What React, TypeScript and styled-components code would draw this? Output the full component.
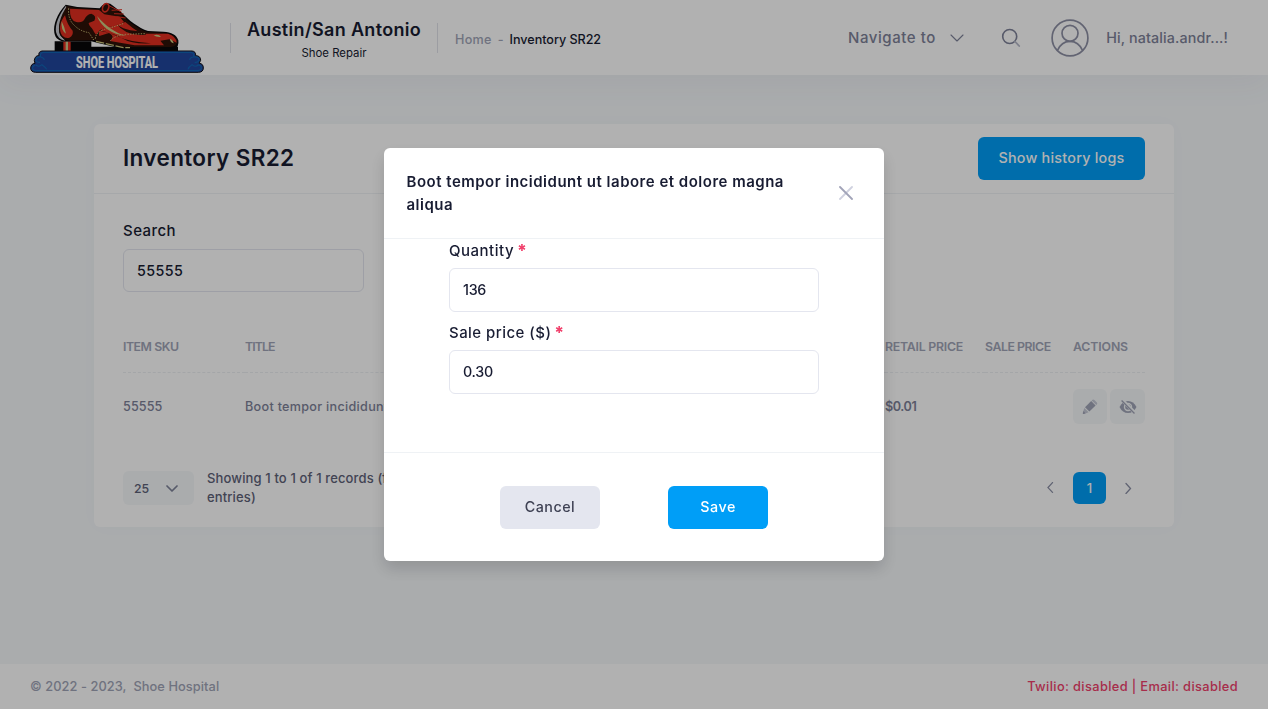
import React from 'react';
import styled, { createGlobalStyle } from 'styled-components';

const Global = createGlobalStyle`
  *, *::before, *::after { box-sizing: border-box; }
  body {
    margin: 0;
    background: #f5f8fa;
    font-family: Inter, 'Open Sans', sans-serif;
    font-size: 13px;
    font-weight: 500;
    color: #181c32;
    overflow: hidden;
  }
  button, input { font: inherit; color: inherit; }
`;

const Page = styled.div`
  display: flex;
  flex-direction: column;
  height: 709px;
`;

const Text = styled.span<{ $size?: number; $weight?: number; $color?: string; $track?: number; $line?: number }>`
  font-size: ${(p) => p.$size ?? 13}px;
  font-weight: ${(p) => p.$weight ?? 500};
  color: ${(p) => p.$color ?? '#181c32'};
  letter-spacing: ${(p) => p.$track ?? 0}px;
  line-height: ${(p) => (p.$line ? `${p.$line}px` : 'normal')};
  white-space: pre;
`;

const Header = styled.header`
  display: flex;
  align-items: center;
  height: 75px;
  flex: none;
  padding: 0 40px 0 30px;
  background: #fff;
  box-shadow: 0 10px 30px rgba(82, 63, 105, 0.05);
`;

const LogoDrawing = styled.svg`
  display: block;
  overflow: visible;
`;

const Divider = styled.div<{ $gap?: number }>`
  width: 1px;
  height: 30px;
  margin-left: ${(p) => p.$gap ?? 0}px;
  background: #e1e3ea;
`;

const Store = styled.div`
  display: flex;
  flex-direction: column;
  align-items: center;
  width: 206px;
  padding-top: 5px;
`;

const Breadcrumb = styled.nav`
  display: flex;
  gap: 6px;
  margin-left: 17px;
  padding-top: 4px;
`;

const HeaderRight = styled.div`
  display: flex;
  align-items: center;
  margin-left: auto;
  svg { display: block; }
`;

const NavMenu = styled.div`
  display: flex;
  align-items: center;
  justify-content: space-between;
  width: 116px;
  margin-right: 37px;
`;

const Profile = styled.div`
  display: flex;
  align-items: center;
  justify-content: space-between;
  width: 177px;
  margin-left: 30px;
`;

const Main = styled.main`
  flex: 1;
  padding: 49px 94px 0;
`;

const Card = styled.section`
  height: 403px;
  background: #fff;
  border-radius: 6px;
  box-shadow: 0 0 20px rgba(76, 87, 125, 0.02);
`;

const CardHeader = styled.div`
  display: flex;
  align-items: center;
  justify-content: space-between;
  height: 70px;
  padding: 0 29px;
  border-bottom: 1px solid #eff2f5;
`;

const CardTitle = styled.h1`
  margin: 0 0 2px;
  font-size: 22.5px;
  font-weight: 600;
  letter-spacing: 0.36px;
`;

const Button = styled.button<{ $width: number; $light?: boolean }>`
  width: ${(p) => p.$width}px;
  height: 43px;
  padding: 0 0 2px;
  border: 0;
  border-radius: 6px;
  background: ${(p) => (p.$light ? '#e4e6ef' : '#009ef7')};
`;

const CardBody = styled.div`
  padding: 27px 29px 0;
`;

const Field = styled.label<{ $width: number }>`
  display: flex;
  flex-direction: column;
  width: ${(p) => p.$width}px;
`;

const Input = styled.input<{ $gap?: number; $height?: number; $track?: number }>`
  height: ${(p) => p.$height ?? 43}px;
  margin-top: ${(p) => p.$gap ?? 7}px;
  padding: 0 13px 1px;
  border: 1px solid #e4e6ef;
  border-radius: 6px;
  background: #fff;
  font-size: 14.3px;
  letter-spacing: ${(p) => p.$track ?? 0}px;
  outline: none;
`;

const Table = styled.div`
  margin-top: 29px;
`;

const Row = styled.div<{ $height: number }>`
  display: grid;
  grid-template-columns: 122px 640px 100px 88px 72px;
  height: ${(p) => p.$height}px;
`;

const Cell = styled.div<{ $head?: boolean }>`
  display: flex;
  align-items: center;
  gap: 3px;
  border-bottom: ${(p) => (p.$head ? '1px dashed #eceff3' : '0')};
`;

const IconButton = styled.button<{ $width: number }>`
  display: flex;
  align-items: center;
  justify-content: center;
  width: ${(p) => p.$width}px;
  height: 35px;
  padding: 0;
  border: 0;
  border-radius: 6px;
  background: #f5f8fa;
`;

const TableFooter = styled.div`
  display: flex;
  align-items: center;
  margin-top: 29px;
`;

const PageSize = styled.div`
  display: flex;
  align-items: center;
  justify-content: space-between;
  width: 71px;
  height: 34px;
  margin-right: 13px;
  padding: 0 16px 0 11px;
  border-radius: 6px;
  background: #f5f8fa;
`;

const Pagination = styled.div`
  display: flex;
  align-items: center;
  gap: 18px;
  margin-left: auto;
  margin-right: -1px;
`;

const PageNumber = styled.div`
  display: flex;
  align-items: center;
  justify-content: center;
  width: 33px;
  height: 32px;
  border-radius: 6px;
  background: #009ef7;
`;

const Footer = styled.footer`
  display: flex;
  align-items: center;
  justify-content: space-between;
  height: 45px;
  padding: 0 30px;
  background: #fff;
`;

const Backdrop = styled.div`
  position: fixed;
  inset: 0;
  display: flex;
  align-items: center;
  justify-content: center;
  background: rgba(0, 0, 0, 0.305);
`;

const Modal = styled.div`
  width: 500px;
  height: 413px;
  background: #fff;
  border-radius: 6px;
  box-shadow: 0 8px 16px rgba(0, 0, 0, 0.15);
`;

const ModalHeader = styled.div`
  display: flex;
  align-items: center;
  justify-content: space-between;
  height: 91px;
  padding: 0 31.5px 0 22.5px;
  border-bottom: 1px solid #eff2f5;
`;

const ModalBody = styled.div`
  display: flex;
  flex-direction: column;
  gap: 9px;
  height: 213px;
  padding: 0 65px;
`;

const LabelRow = styled.div`
  display: flex;
  align-items: center;
  gap: 3px;
  height: 22px;
`;

const Required = styled.span`
  padding-top: 3px;
  font-size: 17px;
  font-weight: 800;
  line-height: 19px;
  color: #f1416c;
`;

const ModalFooter = styled.div`
  display: flex;
  align-items: center;
  justify-content: center;
  gap: 68px;
  height: 109px;
  border-top: 1px solid #eff2f5;
`;

const Logo = () => (
  <LogoDrawing width="174" height="71" viewBox="30 6 522 213">
    <path d="M104 124H214V154H104zM210 140H474V154H210z" fill="#08080a" />
    <path d="M130 125H152V154H130z" fill="#e22f20" />
    <path d="M137 125H144V154H137z" fill="#c8c58a" />
    <path d="M137 14C111 41 99 74 103 98C106 116 119 124 136 124H214L234 129L310 147H462Q478 142 475 121C470 104 455 97 430 95L384 93C356 84 326 61 303 36L279 17Q263 3 247 16L239 25L172 21Z" fill="#08080a" />
    <path d="M138 17C116 45 105 73 108 96Q113 119 136 122L120 105C112 82 123 50 141 30Z" fill="#c9ccd2" />
    <path d="M141 18C120 49 111 82 121 105Q128 119 148 122L224 121L305 141H452Q471 139 472 122Q465 102 430 98L380 96C347 83 322 63 297 37L271 22L239 28L172 24Z" fill="#2d1208" />
    <path d="M150 26L237 30L253 43L299 50L312 66L292 76L262 82L240 90L228 104L222 96C219 85 206 78 206 69L223 62Q231 47 214 41Q200 43 194 57Q187 70 169 66Q148 60 150 26Z" fill="#e22f20" />
    <path d="M135 46C118 67 116 94 127 107Q137 117 148 113Q161 106 158 92Q142 76 135 46Z" fill="#e22f20" />
    <path d="M248 86L316 66Q338 86 364 101L444 101Q469 109 470 128L448 118L421 122L432 136H344L270 123Q287 108 267 99L238 108Q232 97 248 86Z" fill="#e22f20" />
    <path d="M239 92Q282 99 309 116T393 130Q327 126 292 109T239 92ZM288 70Q310 94 372 94L378 104Q320 112 288 70Z" fill="#2d1208" />
    <path d="M231 48C245 83 275 103 321 109C282 97 259 79 231 48ZM125 64Q122 91 138 101Q133 79 125 64ZM401 106Q416 101 423 111Q408 112 401 106ZM450 116Q459 119 461 130Q450 127 450 116Z" fill="#cbc982" />
    <path d="M146 25Q143 59 164 77Q181 94 207 98L221 120M226 116Q228 91 270 84L312 70M271 122Q287 105 318 103L376 101" fill="none" stroke="#cfc57b" strokeWidth="3" strokeDasharray="4 4" />
    <path d="M228 124L310 143H330" fill="none" stroke="#cfc57b" strokeWidth="4" strokeDasharray="25 5" />
    <ellipse cx="257" cy="23" rx="9" ry="13" transform="rotate(22 257 23)" fill="#2d1208" stroke="#e22f20" strokeWidth="5" />
    <path d="M267 17L304 36M275 31L306 29M282 41L311 42M289 50L317 54" stroke="#e22f20" strokeWidth="3" />
    <path d="M66 153H516Q528 154 527 167Q542 167 542 181Q538 188 538 190Q550 191 550 204Q550 216 536 217H46Q32 216 32 204Q33 191 45 190Q40 180 46 172Q50 166 57 167Q54 155 66 153Z" fill="#20469d" stroke="#101014" strokeWidth="3" />
    <path d="M69 157H513Q523 158 521 171Q538 169 537 180Q534 188 524 188M69 157Q59 158 62 171Q47 169 48 182Q51 188 60 187M46 195Q36 199 38 207Q42 213 50 212H533Q546 210 544 201Q541 194 532 195M62 171Q72 173 73 180M521 171Q510 172 509 180M48 195Q56 203 66 194Q77 202 80 208M536 195Q524 203 516 194Q505 201 504 208" fill="none" stroke="#1265b4" strokeWidth="3.5" />
    <text x="168" y="203" textLength="246" lengthAdjust="spacingAndGlyphs" fontFamily="Roboto" fontWeight="700" fontSize="50" fill="#fff" stroke="#fff" strokeWidth="0.6">SHOE HOSPITAL</text>
  </LogoDrawing>
);

const Chevron = ({ w, h, color, stroke }: { w: number; h: number; color: string; stroke: number }) => (
  <svg width={w} height={h} viewBox={`0 0 ${w} ${h}`} fill="none" stroke={color} strokeWidth={stroke} strokeLinecap="round" strokeLinejoin="round">
    <path d={`M1 1L${w / 2} ${h - 1}L${w - 1} 1`} />
  </svg>
);

const PageArrow = ({ right }: { right?: boolean }) => (
  <svg width="22" height="12" viewBox="0 0 22 12" fill="none" stroke="#8c90a6" strokeWidth="1.3" strokeLinecap="round">
    <path d={right ? 'M2 1.5L6.5 6.5L2 11.5' : 'M19.5 0.6L15 5.6L19.5 10.4'} />
  </svg>
);

const COLUMNS = [
  { label: 'ITEM SKU', track: -0.45 },
  { label: 'TITLE', track: -0.9 },
  { label: 'RETAIL PRICE', track: -0.23 },
  { label: 'SALE PRICE', track: -0.45 },
  { label: 'ACTIONS', track: -0.12 },
];

export default function App() {
  return (
    <>
      <Global />
      <Page>
        <Header>
          <Logo />
          <Divider $gap={26} />
          <Store>
            <Text $size={18} $weight={600} $track={0.32} $line={25}>Austin/San Antonio</Text>
            <Text $size={11.4} $weight={400} $line={22}>Shoe Repair</Text>
          </Store>
          <Divider />
          <Breadcrumb>
            <Text $size={12.6} $color="#a1a5b7" $track={0.3}>Home</Text>
            <Text $size={12.6} $color="#a1a5b7">-</Text>
            <Text $size={12.6} $track={-0.04}>Inventory SR22</Text>
          </Breadcrumb>
          <HeaderRight>
            <NavMenu>
              <Text $size={15} $color="#7e8299" $track={0.58}>Navigate to</Text>
              <Chevron w={14} h={8} color="#7e8299" stroke={1.1} />
            </NavMenu>
            <svg width="20" height="20" viewBox="0 0 20 20" fill="none" strokeLinecap="round">
              <circle cx="8.7" cy="8.5" r="7" stroke="#7e8299" strokeWidth="1.6" />
              <path d="M14 13.5L18.2 18" stroke="#b5b8c8" strokeWidth="1.8" />
            </svg>
            <Profile>
              <svg width="38" height="38" viewBox="0 0 38 38" fill="none" stroke="#8e90a5" strokeWidth="1.7">
                <circle cx="19" cy="19" r="17.9" />
                <circle cx="19" cy="14.3" r="8" />
                <path d="M6.4 31.5C9 25.5 13.5 22.3 19 22.3S29 25.5 31.6 31.5" />
              </svg>
              <Text $size={14.3} $color="#7e8299" $track={0.13}>Hi, natalia.andr...!</Text>
            </Profile>
          </HeaderRight>
        </Header>

        <Main>
          <Card>
            <CardHeader>
              <CardTitle>Inventory SR22</CardTitle>
              <Button $width={167}><Text $size={14.3} $color="#fff" $track={0.26}>Show history logs</Text></Button>
            </CardHeader>
            <CardBody>
              <Field $width={241}>
                <Text $size={15} $line={19} $track={0.45}>Search</Text>
                <Input $gap={9} $track={0.4} defaultValue="55555" />
              </Field>
              <Table>
                <Row $height={52}>
                  {COLUMNS.map((c) => (
                    <Cell key={c.label} $head>
                      <Text $size={12.3} $weight={600} $color="#a1a5b7" $track={c.track}>{c.label}</Text>
                    </Cell>
                  ))}
                </Row>
                <Row $height={67}>
                  <Cell><Text $size={12.6} $color="#7e8299" $track={0.1}>55555</Text></Cell>
                  <Cell><Text $size={12.6} $color="#7e8299" $track={0.3}>Boot tempor incididunt ut labore et dolore magna aliqua</Text></Cell>
                  <Cell><Text $size={12.6} $weight={600} $color="#7e8299" $track={-0.4}>$0.01</Text></Cell>
                  <Cell />
                  <Cell>
                    <IconButton $width={34}>
                      <svg width="16" height="16" viewBox="0 0 16 16">
                        <path d="M3 8.2L9.2 2L13.6 6.4L7.4 12.6Z" fill="#a1a5b7" />
                        <path d="M10.1 1.1Q11.2 0 12.4 1.1L14.9 3.5Q15.8 4.7 14.8 5.6L14.3 6L9.7 1.5ZM2.3 9L6.6 13.2L2.2 15Q.4 15.4 .9 13.6Z" fill="#c5c8d5" />
                        <path d="M1.5 12L3.5 14.3L1.6 15Q.5 15.2 .9 14Z" fill="#a1a5b7" />
                      </svg>
                    </IconButton>
                    <IconButton $width={35}>
                      <svg width="18" height="14" viewBox="0 0 18 14">
                        <path d="M.5 7Q3.5 1 9 1T17.5 7Q14.5 13 9 13T.5 7Z" fill="#a1a5b7" />
                        <circle cx="9" cy="7" r="4.2" fill="#f5f8fa" />
                        <circle cx="9" cy="7" r="2.8" fill="#a1a5b7" />
                        <path d="M3.2 0L16.5 13.5" stroke="#f5f8fa" strokeWidth="3.4" />
                        <path d="M2.6 .5L15.5 13.5" stroke="#a1a5b7" strokeWidth="1.3" />
                      </svg>
                    </IconButton>
                  </Cell>
                </Row>
              </Table>
              <TableFooter>
                <PageSize>
                  <Text $size={12.3} $color="#5e6278">25</Text>
                  <Chevron w={12} h={7} color="#7e8299" stroke={1.7} />
                </PageSize>
                <Text $size={13} $color="#5e6278" $line={19} $track={0.13}>{'Showing 1 to 1 of 1 records (filtered from 1 total\nentries)'}</Text>
                <Pagination>
                  <PageArrow />
                  <PageNumber><Text $size={13} $color="#fff">1</Text></PageNumber>
                  <PageArrow right />
                </Pagination>
              </TableFooter>
            </CardBody>
          </Card>
        </Main>

        <Footer>
          <Text $size={12.8} $color="#a1a5b7" $track={0.08}>{'© 2022 - 2023,  Shoe Hospital'}</Text>
          <Text $size={12.8} $color="#f1416c" $track={0.38}>Twilio: disabled | Email: disabled</Text>
        </Footer>
      </Page>

      <Backdrop>
        <Modal role="dialog">
          <ModalHeader>
            <Text $size={15} $weight={600} $line={23} $track={0.5}>{'Boot tempor incididunt ut labore et dolore magna\naliqua'}</Text>
            <svg width="14" height="14" viewBox="0 0 14 14" strokeWidth="1.8" strokeLinecap="round">
              <path d="M13 1L1 13" stroke="#cfd1df" />
              <path d="M1 1L13 13" stroke="#a1a3b8" />
            </svg>
          </ModalHeader>
          <ModalBody>
            <Field $width={370}>
              <LabelRow><Text $size={15} $track={0.5}>Quantity</Text><Required>*</Required></LabelRow>
              <Input $height={44} $track={-0.3} defaultValue="136" />
            </Field>
            <Field $width={370}>
              <LabelRow><Text $size={15} $track={0.45}>Sale price ($)</Text><Required>*</Required></LabelRow>
              <Input $height={44} $track={-0.3} defaultValue="0.30" />
            </Field>
          </ModalBody>
          <ModalFooter>
            <Button $width={100} $light><Text $size={14.3} $color="#3f4254" $track={0.5}>Cancel</Text></Button>
            <Button $width={100}><Text $size={14.3} $color="#fff" $track={0.55}>Save</Text></Button>
          </ModalFooter>
        </Modal>
      </Backdrop>
    </>
  );
}
